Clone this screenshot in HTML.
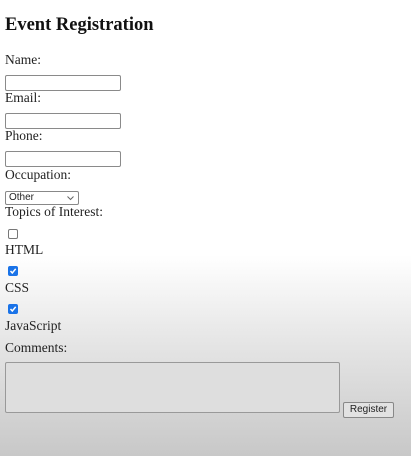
<!DOCTYPE html>
<html><head><style>
html,body{margin:0;padding:0}
body{width:411px;height:456px;overflow:hidden;position:relative;font-family:"Liberation Serif",serif;color:#222;
background:linear-gradient(#fff 0px,#fff 255px,#e6e6e6 340px,#c8c8c8 456px)}
.t{position:absolute;left:5px;font-size:13.5px;line-height:18px;white-space:nowrap}
h1{position:absolute;left:5px;top:12px;margin:0;font-size:18.5px;line-height:26px;font-weight:bold;color:#111}
.in{position:absolute;left:5px;width:116px;height:16px;border:1px solid #8a8a8a;border-radius:2px;background:#fff;box-sizing:border-box}
.cb{position:absolute;left:8px;width:10px;height:10px;border-radius:2px;box-sizing:border-box}
.off{border:1px solid #777;background:#fff}
.on{background:#1a73e8}
.on svg{position:absolute;left:1px;top:1px}
.sel{position:absolute;left:5px;top:191px;width:74px;height:14px;border:1px solid #888;border-radius:2px;box-sizing:border-box;background:#fff;font-family:"Liberation Sans",sans-serif;font-size:10px;line-height:12px;padding-left:3px}
.ta{position:absolute;left:5px;top:362px;width:335px;height:51px;border:1px solid #999;border-radius:2px;box-sizing:border-box;background:#dedede}
.btn{position:absolute;left:343px;top:402px;width:51px;height:16px;border:1px solid #888;border-radius:2px;box-sizing:border-box;background:#e2e2e2;font-family:"Liberation Sans",sans-serif;font-size:10px;line-height:14px;text-align:center;color:#222}
</style></head><body>
<h1>Event Registration</h1>
<div class="t" style="top:51px">Name:</div>
<div class="in" style="top:75px"></div>
<div class="t" style="top:89px">Email:</div>
<div class="in" style="top:113px"></div>
<div class="t" style="top:127px">Phone:</div>
<div class="in" style="top:151px"></div>
<div class="t" style="top:166px">Occupation:</div>
<div class="sel">Other<svg style="position:absolute;right:4px;top:4px" width="7" height="5"><path d="M0.5 0.5 L3.5 3.5 L6.5 0.5" fill="none" stroke="#666" stroke-width="1"/></svg></div>
<div class="t" style="top:203px">Topics of Interest:</div>
<div class="cb off" style="top:229px"></div>
<div class="t" style="top:241px">HTML</div>
<div class="cb on" style="top:266px"><svg width="8" height="8"><path d="M1.5 4 L3.3 6 L6.7 1.8" fill="none" stroke="#fff" stroke-width="1.5"/></svg></div>
<div class="t" style="top:279px">CSS</div>
<div class="cb on" style="top:304px"><svg width="8" height="8"><path d="M1.5 4 L3.3 6 L6.7 1.8" fill="none" stroke="#fff" stroke-width="1.5"/></svg></div>
<div class="t" style="top:317px">JavaScript</div>
<div class="t" style="top:339px">Comments:</div>
<div class="ta"></div>
<div class="btn">Register</div>
</body></html>
